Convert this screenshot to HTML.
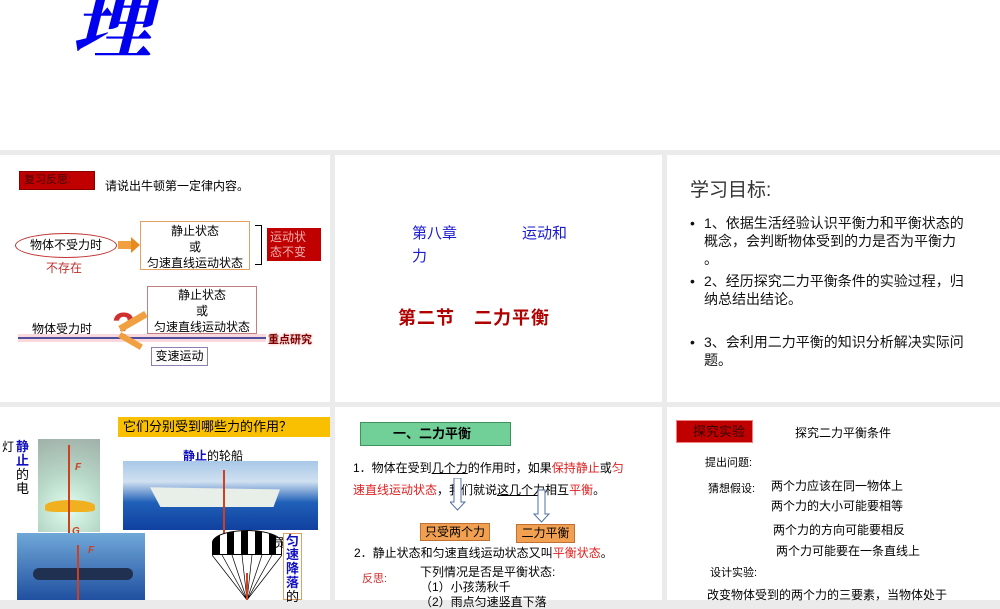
<!DOCTYPE html>
<html><head><meta charset="utf-8"><style>
*{margin:0;padding:0;box-sizing:border-box}
body{width:1000px;height:600px;overflow:hidden;background:#ebebeb;position:relative;font-family:"Liberation Sans","Noto Sans CJK SC",sans-serif;color:#000}
.a{position:absolute;white-space:nowrap}
.s{position:absolute;background:#fff}
.t{font-size:12px;line-height:14px}
.bx{position:absolute;border:1px solid #e8a060;background:#fff;text-align:center;font-size:12px;line-height:16px}
.r{color:#e02020}
</style></head><body>
<div class="s" style="left:0;top:0;width:1000px;height:150px"></div>
<div class="a" style="left:72px;top:-28px;font-size:80px;line-height:90px;color:#0000ee;font-style:italic;font-weight:bold;font-family:'Noto Serif CJK SC',serif">理</div>

<!-- slide 1 -->
<div class="s" style="left:0;top:155px;width:330px;height:247px"></div>
<div class="a" style="left:19px;top:171px;width:76px;height:19px;background:#c00000;border:1px solid #800;color:#400;font-size:11px;line-height:17px;padding-left:4px">复习反思:</div>
<div class="a t" style="left:105px;top:179px">请说出牛顿第一定律内容。</div>
<div class="a" style="left:15px;top:233px;width:102px;height:25px;border:1.5px solid #c03030;border-radius:50%;font-size:12px;line-height:22px;text-align:center">物体不受力时</div>
<div class="a r t" style="left:46px;top:261px;color:#c03030">不存在</div>
<div class="a" style="left:118px;top:241px;width:14px;height:8px;background:#f0a040"></div>
<div class="a" style="left:131px;top:237px;border-left:9px solid #e88a20;border-top:8px solid transparent;border-bottom:8px solid transparent"></div>
<div class="bx" style="left:140px;top:221px;width:110px;height:49px;padding-top:1px">静止状态<br>或<br>匀速直线运动状态</div>
<div class="a" style="left:255px;top:225px;width:7px;height:40px;border:1.5px solid #000;border-left:none"></div>
<div class="a" style="left:267px;top:228px;width:54px;height:33px;background:#c00000;color:#f0b0b0;font-size:12px;line-height:15px;padding:2px 3px">运动状<br>态不变</div>
<div class="bx" style="left:147px;top:286px;width:110px;height:48px;border-color:#c08080">静止状态<br>或<br>匀速直线运动状态</div>
<div class="a t" style="left:32px;top:322px">物体受力时</div>
<div class="a" style="left:18px;top:334px;width:248px;height:8px;background:#fbd8dc"></div>
<div class="a" style="left:18px;top:337px;width:248px;height:1.5px;background:#5050a0"></div>
<div class="a" style="left:268px;top:331px;font-size:11px;color:#700;font-weight:bold;text-shadow:0 0 3px #f99">重点研究</div>
<div class="a" style="left:112px;top:307px;font-size:38px;line-height:40px;color:#d03030;font-weight:bold">?</div>
<div class="a" style="left:118px;top:318px;width:30px;height:7px;background:#f0a040;transform:rotate(-30deg)"></div>
<div class="a" style="left:118px;top:338px;width:25px;height:6px;background:#f0a040;transform:rotate(30deg)"></div>
<div class="bx" style="left:151px;top:347px;width:57px;height:19px;border-color:#9080b0">变速运动</div>

<!-- slide 2 -->
<div class="s" style="left:335px;top:155px;width:327px;height:247px"></div>
<div class="a" style="left:412px;top:222px;font-size:15px;color:#1a1ad0">第八章</div>
<div class="a" style="left:522px;top:222px;font-size:15px;color:#1a1ad0">运动和</div>
<div class="a" style="left:412px;top:245px;font-size:15px;color:#1a1ad0">力</div>
<div class="a" style="left:398px;top:304px;font-size:18px;font-weight:bold;color:#b00000;letter-spacing:1px">第二节　二力平衡</div>

<!-- slide 3 -->
<div class="s" style="left:667px;top:155px;width:333px;height:247px"></div>
<div class="a" style="left:690px;top:175px;font-size:19px;color:#333">学习目标:</div>
<div class="a" style="left:690px;top:214px;font-size:14px;line-height:18px;color:#111">
<div style="position:relative;padding-left:14px;margin-bottom:4px"><span style="position:absolute;left:0">•</span>1、依据生活经验认识平衡力和平衡状态的<br>概念，会判断物体受到的力是否为平衡力<br>。</div>
<div style="position:relative;padding-left:14px;margin-bottom:25px"><span style="position:absolute;left:0">•</span>2、经历探究二力平衡条件的实验过程，归<br>纳总结出结论。</div>
<div style="position:relative;padding-left:14px"><span style="position:absolute;left:0">•</span>3、会利用二力平衡的知识分析解决实际问<br>题。</div>
</div>

<!-- slide 4 -->
<div class="s" style="left:0;top:407px;width:330px;height:193px"></div>
<div class="a" style="left:118px;top:417px;width:212px;height:20px;background:#f8c000;font-size:13px;line-height:20px;padding-left:5px">它们分别受到哪些力的作用？</div>
<div class="a t" style="left:2px;top:440px">灯</div>
<div class="a" style="left:16px;top:440px;font-size:13px;line-height:14px;color:#1010c0;font-weight:bold">静<br>止</div>
<div class="a" style="left:16px;top:468px;font-size:13px;line-height:14px">的<br>电</div>
<div class="a" style="left:38px;top:439px;width:62px;height:93px;background:radial-gradient(circle at 50% 75%,#e0fff0 0,#b8d8c8 45%,#a0b0a8 100%)"></div>
<div class="a" style="left:45px;top:500px;width:50px;height:12px;background:#f0b020;border-radius:50% 50% 20% 20%"></div>
<div class="a" style="left:68px;top:445px;width:2px;height:88px;background:#d04020"></div>
<div class="a" style="left:75px;top:462px;font-size:10px;color:#d04020;font-style:italic;font-weight:bold">F</div>
<div class="a" style="left:72px;top:526px;font-size:10px;color:#d04020;font-style:italic;font-weight:bold">G</div>
<div class="a" style="left:183px;top:447px;font-size:12px"><b style="color:#1010c0">静止</b>的轮船</div>
<div class="a" style="left:123px;top:461px;width:195px;height:69px;background:linear-gradient(#a8c8e8 0,#d0e0f0 30%,#2060b8 60%,#1040a0 100%)"></div>
<div class="a" style="left:150px;top:485px;width:130px;height:22px;background:#e8eee8;clip-path:polygon(0 10%,100% 20%,95% 100%,8% 100%)"></div>
<div class="a" style="left:223px;top:470px;width:2px;height:70px;background:#d04020"></div>
<div class="a" style="left:17px;top:533px;width:128px;height:67px;background:linear-gradient(#70a8d8,#2050a0)"></div>
<div class="a" style="left:33px;top:568px;width:100px;height:12px;background:#203050;border-radius:6px"></div>
<div class="a" style="left:77px;top:545px;width:2px;height:55px;background:#d04020"></div>
<div class="a" style="left:88px;top:545px;font-size:10px;color:#d04020;font-style:italic;font-weight:bold">F</div>
<div class="a" style="left:212px;top:530px;width:70px;height:25px;border-radius:50% 50% 0 0;background:repeating-linear-gradient(90deg,#000 0 7px,#fff 7px 14px);border:1px solid #000"></div>
<svg class="a" style="left:212px;top:553px" width="70" height="47"><g stroke="#000" stroke-width=".7" fill="none"><path d="M0 2L35 47M10 2L35 47M20 2L35 47M30 2L35 47M40 2L35 47M50 2L35 47M60 2L35 47M70 2L35 47"/></g><path d="M35 20V47" stroke="#d04020" stroke-width="2"/></svg>
<div class="a t" style="left:273px;top:536px">员</div>
<div class="a" style="left:283px;top:533px;width:19px;height:67px;border:1px solid #e0a060;font-size:13px;line-height:14px;color:#1010c0;font-weight:bold;text-align:center">匀<br>速<br>降<br>落<br><span style="color:#000;font-weight:normal">的</span></div>

<!-- slide 5 -->
<div class="s" style="left:335px;top:407px;width:327px;height:193px"></div>
<div class="a" style="left:360px;top:422px;width:151px;height:24px;background:#70d098;border:1px solid #409060;font-size:13px;font-weight:bold;line-height:22px;padding-left:32px">一、二力平衡</div>
<div class="a" style="left:353px;top:457px;font-size:12px;line-height:22px">1．物体在受到<u>几个力</u>的作用时，如果<span class="r">保持静止</span>或<span class="r">匀</span><br><span class="r">速直线运动状态</span>，我们就说<u>这几个力</u>相互<span class="r">平衡</span>。</div>
<svg class="a" style="left:450px;top:478px" width="110" height="48"><g fill="#fff" stroke="#5070a0"><path d="M4 0h7v24h4l-7.5 8l-7.5-8h4z"/><path d="M88 12h7v24h4l-7.5 8l-7.5-8h4z"/></g></svg>
<div class="a" style="left:420px;top:523px;width:70px;height:18px;background:#f0a050;border:1px solid #c07030;font-size:12px;line-height:16px;text-align:center">只受两个力</div>
<div class="a" style="left:516px;top:524px;width:59px;height:19px;background:#f0a050;border:1px solid #c07030;font-size:12px;line-height:17px;text-align:center">二力平衡</div>
<div class="a t" style="left:354px;top:546px">2．静止状态和匀速直线运动状态又叫<span class="r">平衡状态</span>。</div>
<div class="a t r" style="left:362px;top:572px;font-size:11px;color:#d03030">反思:</div>
<div class="a t" style="left:420px;top:565px">下列情况是否是平衡状态:</div>
<div class="a t" style="left:420px;top:580px">（1）小孩荡秋千</div>
<div class="a t" style="left:420px;top:595px">（2）雨点匀速竖直下落</div>

<!-- slide 6 -->
<div class="s" style="left:667px;top:407px;width:333px;height:193px"></div>
<div class="a" style="left:676px;top:420px;width:77px;height:23px;background:#c00000;border:1px solid #f08080;font-size:13px;line-height:21px;padding-left:16px;color:#300">探究实验</div>
<div class="a t" style="left:795px;top:426px">探究二力平衡条件</div>
<div class="a" style="left:705px;top:454px;font-size:11px">提出问题:</div>
<div class="a" style="left:708px;top:480px;font-size:11px">猜想假设:</div>
<div class="a t" style="left:771px;top:479px">两个力应该在同一物体上</div>
<div class="a t" style="left:771px;top:499px">两个力的大小可能要相等</div>
<div class="a t" style="left:773px;top:523px">两个力的方向可能要相反</div>
<div class="a t" style="left:776px;top:544px">两个力可能要在一条直线上</div>
<div class="a" style="left:710px;top:564px;font-size:11px">设计实验:</div>
<div class="a t" style="left:707px;top:588px">改变物体受到的两个力的三要素，当物体处于</div>
</body></html>
